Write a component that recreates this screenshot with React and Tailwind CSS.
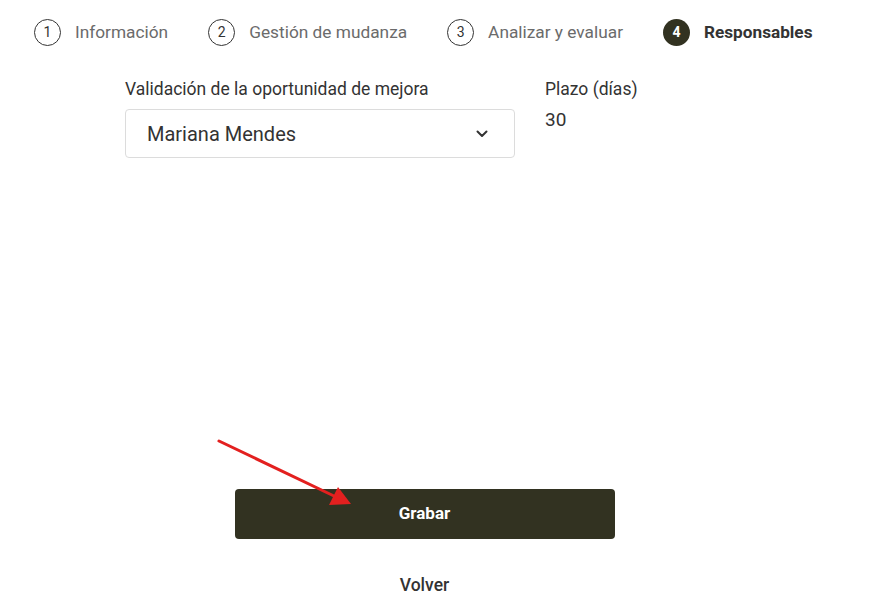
import React from "react";

function Step({ n, label, active }) {
  return (
    <div className="flex items-center gap-[14px]">
      <div
        className={
          active
            ? "flex h-[27px] w-[27px] items-center justify-center rounded-full bg-[#323221] text-[14px] font-bold text-white"
            : "flex h-[27px] w-[27px] items-center justify-center rounded-full border border-[#333] text-[14px] text-[#333]"
        }
      >
        {n}
      </div>
      <span
        className={
          active
            ? "text-[17.2px] font-bold text-[#333]"
            : "text-[17.3px] text-[#6b6b6b]"
        }
      >
        {label}
      </span>
    </div>
  );
}

export default function App() {
  return (
    <div
      className="relative h-[615px] w-[875px] overflow-hidden bg-white"
      style={{ fontFamily: "Roboto, 'Liberation Sans', sans-serif" }}
    >
      <div className="flex items-center gap-[40px] pl-[34px] pt-[19px]">
        <Step n="1" label="Información" />
        <Step n="2" label="Gestión de mudanza" />
        <Step n="3" label="Analizar y evaluar" />
        <Step n="4" label="Responsables" active />
      </div>

      <div className="mt-[32px] flex gap-[30px] pl-[125px]">
        <div className="w-[390px]">
          <div className="text-[17.5px] leading-[22px] text-[#333]">
            Validación de la oportunidad de mejora
          </div>
          <div className="mt-[9px] flex h-[49px] items-center justify-between rounded-[4px] border border-[#dcdcdc] pl-[21px] pr-[26px]">
            <span className="text-[20px] text-[#333]">Mariana Mendes</span>
            <svg width="12" height="8" viewBox="0 0 12 8" fill="none">
              <path d="M1.5 1.5 L6 6 L10.5 1.5" stroke="#333" strokeWidth="2" strokeLinecap="round" strokeLinejoin="round" />
            </svg>
          </div>
        </div>
        <div>
          <div className="text-[17.5px] leading-[22px] text-[#333]">Plazo (días)</div>
          <div className="mt-[8px] text-[19px] leading-[24px] text-[#333]">30</div>
        </div>
      </div>

      <div className="mt-[331px] flex flex-col items-center">
        <div className="ml-[-26px] flex flex-col items-center">
          <button className="flex h-[50px] w-[380px] items-center justify-center rounded-[4px] bg-[#323221] text-[17px] font-bold text-white">
            Grabar
          </button>
          <div className="mt-[33px] text-[17.5px] font-medium text-[#333]">Volver</div>
        </div>
      </div>

      <svg className="absolute left-0 top-0" width="875" height="615" viewBox="0 0 875 615">
        <line x1="219" y1="441" x2="334" y2="496" stroke="#e3201f" strokeWidth="3" strokeLinecap="round" />
        <polygon points="351,504 329,505 338,487" fill="#e3201f" />
      </svg>
    </div>
  );
}
